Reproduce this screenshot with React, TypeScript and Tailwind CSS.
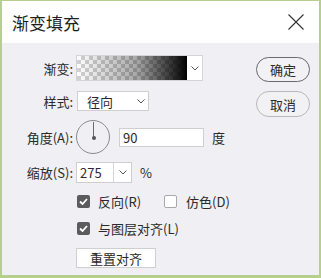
import React from "react";

const Chevron = () => (
  <svg width="8" height="5" viewBox="0 0 8 5" className="block">
    <path d="M0.5 0.5 L4 4 L7.5 0.5" fill="none" stroke="#555" strokeWidth="1" />
  </svg>
);

const Check = ({ checked }: { checked: boolean }) =>
  checked ? (
    <div className="w-[13px] h-[13px] rounded-[2px] bg-[#5b5b5d] flex items-center justify-center">
      <svg width="9" height="7" viewBox="0 0 9 7">
        <path d="M1 3.5 L3.5 6 L8 1" fill="none" stroke="#fff" strokeWidth="1.8" />
      </svg>
    </div>
  ) : (
    <div className="w-[13px] h-[13px] rounded-[2px] bg-white border border-[#a8a8a8]" />
  );

export default function App() {
  return (
    <div
      className="w-[321px] h-[278px] border-l-2 border-t border-r-2 border-b-[3px] border-[#b6cf8f] flex flex-col text-[#2a2a2a] text-[13px] leading-none"
      style={{ fontFamily: '"Noto Sans CJK SC", "Noto Sans", sans-serif' }}
    >
      <div className="h-[42px] bg-white flex items-center justify-between pl-[10px] pr-[15px] shrink-0">
        <span className="text-[17px] text-[#1e1e1e]">渐变填充</span>
        <svg width="16" height="16" viewBox="0 0 16 16">
          <path d="M0.5 0.5 L15.5 15.5 M15.5 0.5 L0.5 15.5" stroke="#333" strokeWidth="1.1" />
        </svg>
      </div>
      <div className="flex-1 bg-[#f0eff3] flex flex-row">
        <div className="flex-1 flex flex-col pt-[12px]">
          {/* gradient */}
          <div className="flex items-center h-[26px]">
            <span className="w-[71px] text-right">渐变:</span>
            <div className="ml-[3px] w-[127px] h-[26px] border border-[#d4d4d6] flex bg-white">
              <div className="flex-1 [background-image:linear-gradient(to_right,rgba(0,0,0,0)_0%,rgba(0,0,0,0.35)_55%,#000_100%),repeating-conic-gradient(#d2d2d2_0_25%,#ffffff_0_50%)] [background-size:100%_100%,8px_8px]" />
              <div className="w-[15px] flex items-center justify-center">
                <Chevron />
              </div>
            </div>
          </div>
          {/* style */}
          <div className="flex items-center h-[20px] mt-[10px]">
            <span className="w-[71px] text-right">样式:</span>
            <div className="ml-[4px] w-[72px] h-[20px] bg-white border border-[#cfcfd2] flex items-center justify-between pl-[9px] pr-[3px]">
              <span>径向</span>
              <Chevron />
            </div>
          </div>
          {/* angle */}
          <div className="flex items-center h-[34px] mt-[9px]">
            <span className="w-[71px] text-right">角度(A):</span>
            <div className="ml-[3px] w-[34px] h-[34px] rounded-full border border-[#8a8a8c] relative">
              <div className="absolute left-[16px] top-[1px] w-[1px] h-[15px] bg-[#6a6a6a]" />
              <div className="absolute left-[14.5px] top-[14.5px] w-[4px] h-[4px] rounded-full bg-[#555]" />
            </div>
            <div className="ml-[9px] w-[85px] h-[19px] bg-white border border-[#cfcfd2] flex items-center pl-[3px]">
              90
            </div>
            <span className="ml-[8px]">度</span>
          </div>
          {/* scale */}
          <div className="flex items-center h-[21px] mt-[8px]">
            <span className="w-[71px] text-right">缩放(S):</span>
            <div className="ml-[3px] w-[56px] h-[21px] bg-white border border-[#cfcfd2] flex items-center">
              <span className="flex-1 pl-[3px]">275</span>
              <div className="w-[18px] h-full border-l border-[#d6d6d8] flex items-center justify-center">
                <Chevron />
              </div>
            </div>
            <span className="ml-[8px]">%</span>
          </div>
          {/* checkboxes */}
          <div className="flex items-center h-[14px] mt-[11px] pl-[75px]">
            <Check checked />
            <span className="ml-[8px]">反向(R)</span>
            <div className="ml-[23px]">
              <Check checked={false} />
            </div>
            <span className="ml-[9px]">仿色(D)</span>
          </div>
          <div className="flex items-center h-[14px] mt-[13px] pl-[75px]">
            <Check checked />
            <span className="ml-[8px]">与图层对齐(L)</span>
          </div>
          <div className="mt-[13px] ml-[74px] w-[80px] h-[20px] bg-white border border-[#cfcfd2] flex items-center justify-center">
            重置对齐
          </div>
        </div>
        <div className="flex flex-col pt-[14px] pr-[9px] gap-[9px]">
          <div className="w-[54px] h-[25px] rounded-full border border-[#6a6a6c] flex items-center justify-center bg-[#f2f1f4]">
            确定
          </div>
          <div className="w-[54px] h-[26px] rounded-full border border-[#b8b8bb] flex items-center justify-center bg-[#f2f1f4]">
            取消
          </div>
        </div>
      </div>
    </div>
  );
}
